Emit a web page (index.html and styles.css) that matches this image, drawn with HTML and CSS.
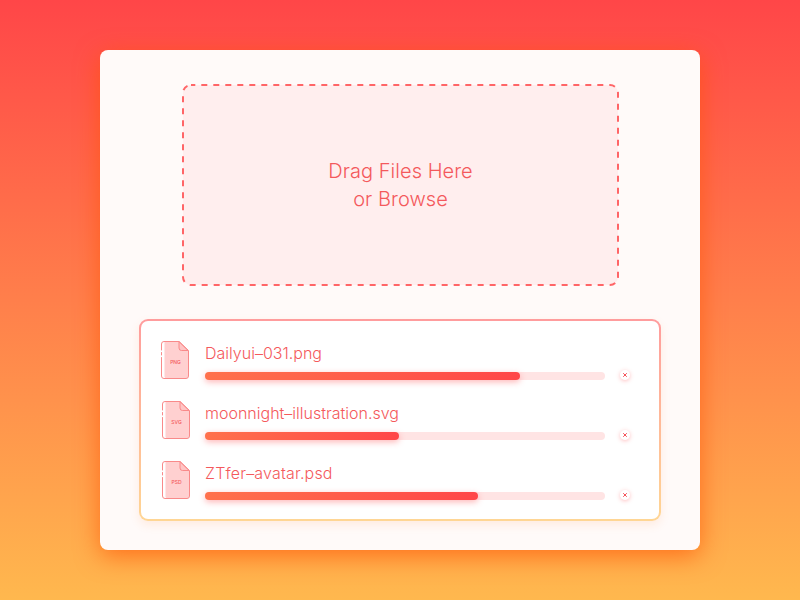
FILE: index.html
```html
<!DOCTYPE html>
<html lang="en">
<head>
<meta charset="utf-8">
<title>File upload</title>
<link rel="stylesheet" href="styles.css">
</head>
<body>
<svg class="defs" aria-hidden="true">
  <symbol id="file" viewBox="0 0 30 40">
    <path d="M4.500 1.500H19l9 9V36a2.500 2.500 0 0 1-2.500 2.500H5.500L4.500 37Z" fill="#ffd0d0"/>
    <path d="M19 1.500v6.500a2.500 2.500 0 0 0 2.500 2.500H28Z" fill="#ffc4c4" stroke="#f98a8a"/>
    <path d="M1.500 10V4A2.500 2.500 0 0 1 4 1.500H19L28.500 10.500V36a2.500 2.500 0 0 1-2.500 2.500H4A2.500 2.500 0 0 1 1.500 36V17.500M1.500 12.500v2.500" fill="none" stroke="#f98a8a" stroke-linecap="round"/>
  </symbol>
  <symbol id="close" viewBox="0 0 4 4">
    <path d="M.2.2 3.800 3.800M3.800.2.2 3.800" stroke="#f4535a" stroke-width="1"/>
  </symbol>
</svg>
<main class="card">
  <section class="drop">
    <svg class="drop-frame" viewBox="0 0 437 202"><rect x="1" y="1" width="435" height="200" rx="8"/></svg>
    <p>Drag Files Here<br>or Browse</p>
  </section>
  <section class="files">
    <article class="file">
      <div class="icon"><svg><use href="#file"/></svg><span>PNG</span></div>
      <div class="info"><h2>Dailyui–031.png</h2><div class="track"><div class="bar" style="width:315px"></div></div></div>
      <button class="close" aria-label="Remove"><svg><use href="#close"/></svg></button>
    </article>
    <article class="file shifted">
      <div class="icon"><svg><use href="#file"/></svg><span>SVG</span></div>
      <div class="info"><h2>moonnight–illustration.svg</h2><div class="track"><div class="bar" style="width:194px"></div></div></div>
      <button class="close" aria-label="Remove"><svg><use href="#close"/></svg></button>
    </article>
    <article class="file shifted">
      <div class="icon"><svg><use href="#file"/></svg><span>PSD</span></div>
      <div class="info"><h2 class="wide">ZTfer–avatar.psd</h2><div class="track"><div class="bar" style="width:273px"></div></div></div>
      <button class="close" aria-label="Remove"><svg><use href="#close"/></svg></button>
    </article>
  </section>
</main>
</body>
</html>
```
FILE: styles.css
```css
* { box-sizing: border-box; }
body {
  margin: 0;
  height: 600px;
  padding: 50px 100px;
  overflow: hidden;
  background: linear-gradient(#ff4648, #ffb84e);
  font-family: Inter, "Open Sans", sans-serif;
  font-weight: 300;
  color: #f4595c;
}
.defs { display: block; width: 0; height: 0; position: absolute; }
.card {
  height: 500px;
  padding: 34px 39px 0;
  border-radius: 8px;
  background: #fffaf9;
  box-shadow: 0 6px 24px rgba(255, 80, 0, .66);
}
.drop {
  position: relative;
  width: 437px;
  height: 202px;
  margin-left: 43px;
  display: flex;
  align-items: center;
  justify-content: center;
}
.drop-frame { position: absolute; inset: 0; width: 437px; height: 202px; }
.drop-frame rect { fill: #ffeeee; stroke: #ff6567; stroke-width: 2; stroke-dasharray: 6 6; stroke-dashoffset: 1.7; }
.drop p {
  position: relative;
  margin: 0;
  font-size: 20px;
  line-height: 28px;
  letter-spacing: .05px;
  text-align: center;
}
.files {
  width: 522px;
  height: 202px;
  margin-top: 33px;
  padding: 10px 19px;
  border: 2px solid transparent;
  border-radius: 9px;
  background: linear-gradient(#fff, #fff) padding-box, linear-gradient(#ff9c9d, #ffd694) border-box;
  box-shadow: 0 4px 10px rgba(255, 150, 80, .14);
}
.file { height: 60px; display: flex; }
.icon {
  width: 30px;
  height: 40px;
  margin-top: 9px;
  display: grid;
  place-items: center;
}
.icon > * { grid-area: 1 / 1; }
.icon svg { width: 30px; height: 40px; }
.icon span { font-size: 5px; line-height: 6px; font-weight: 500; padding: 3px 0 0 1px; }
.shifted .icon { margin-left: 1px; margin-right: -1px; }
.info { width: 400px; margin-left: 15px; padding-top: 11px; }
h2 { margin: 0; font-size: 16px; line-height: 22px; font-weight: 300; white-space: nowrap; }
.wide { letter-spacing: .18px; }
.track { height: 8px; margin-top: 8px; border-radius: 4px; background: #ffe4e4; }
.bar {
  height: 8px;
  border-radius: 4px;
  background: linear-gradient(90deg, #ff714c, #ff4648);
  box-shadow: 0 2px 6px rgba(255, 70, 72, .4);
}
.close {
  width: 10px;
  height: 10px;
  margin: 39px 0 0 15px;
  padding: 0;
  border: 0;
  border-radius: 50%;
  display: grid;
  place-items: center;
  background: #fff;
  box-shadow: 0 1px 4px rgba(255, 70, 72, .35);
}
.close svg { width: 4px; height: 4px; }
```
